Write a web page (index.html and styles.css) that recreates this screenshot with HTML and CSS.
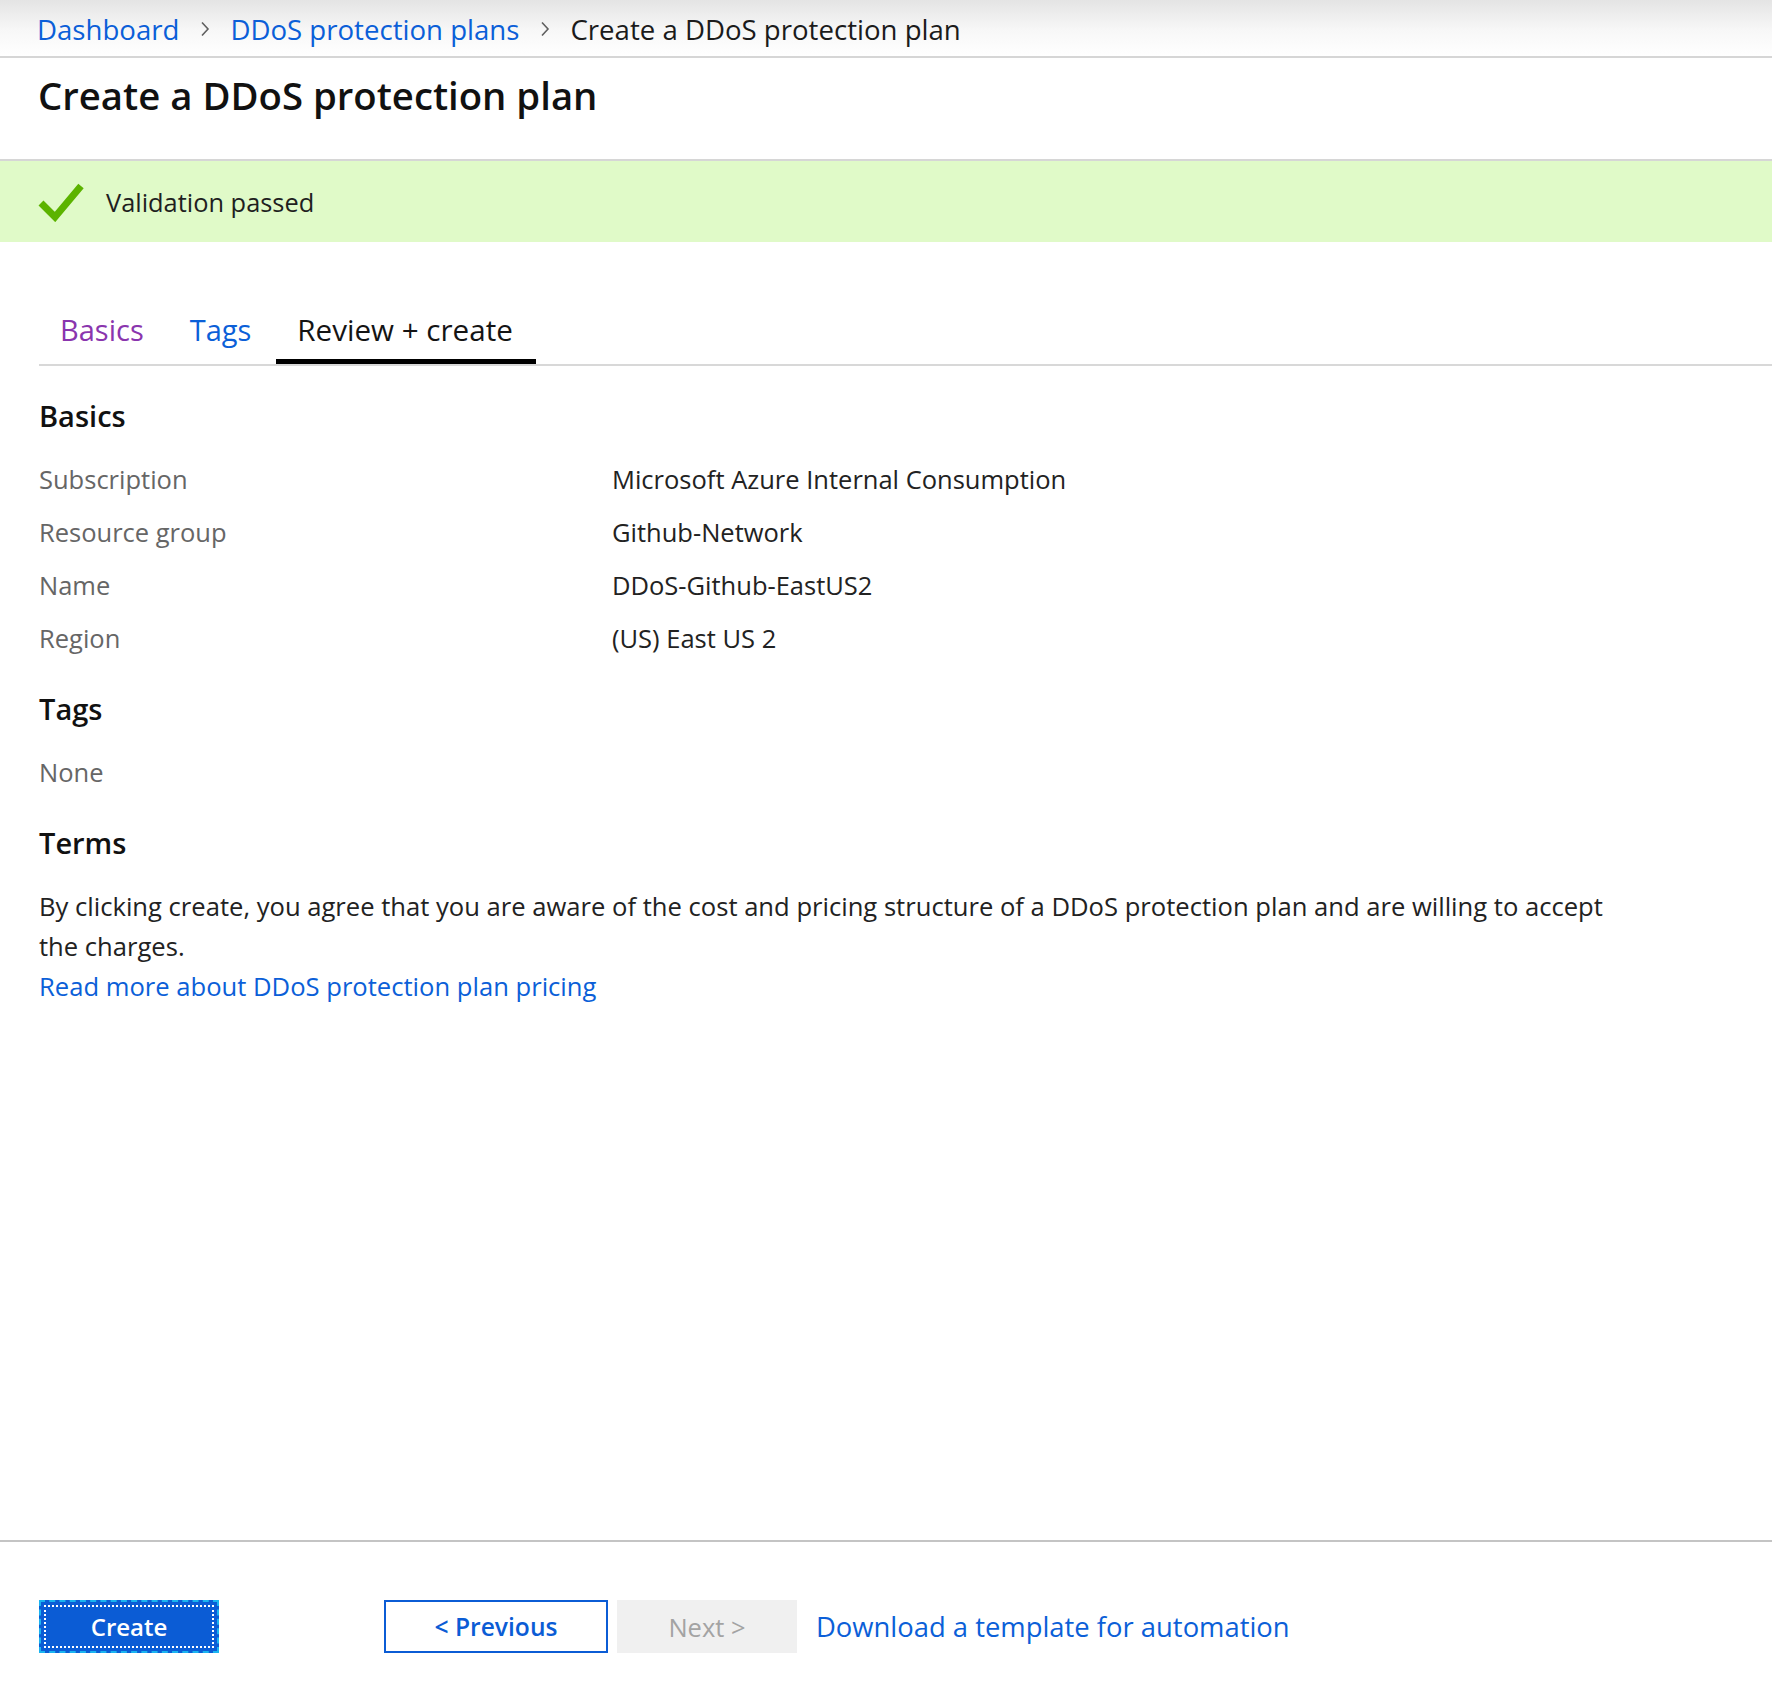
FILE: index.html
```html
<!DOCTYPE html>
<html lang="en">
<head>
<meta charset="utf-8">
<title>Create a DDoS protection plan</title>
<link rel="stylesheet" href="styles.css">
</head>
<body>
<div class="page">
  <nav class="crumbs">
    <a class="crumb-link" href="#">Dashboard</a>
    <svg class="chev" viewBox="0 0 10 16" width="10" height="16"><path d="M2 1.5 L8 8 L2 14.5" fill="none" stroke="#5f5f5f" stroke-width="1.6"/></svg>
    <a class="crumb-link" href="#">DDoS protection plans</a>
    <svg class="chev" viewBox="0 0 10 16" width="10" height="16"><path d="M2 1.5 L8 8 L2 14.5" fill="none" stroke="#5f5f5f" stroke-width="1.6"/></svg>
    <span class="crumb-current">Create a DDoS protection plan</span>
  </nav>

  <header class="title-bar">
    <h1 class="title">Create a DDoS protection plan</h1>
  </header>

  <div class="banner">
    <svg class="check" viewBox="0 0 46 40" width="46" height="40"><polyline points="3,21 17,35 43,4" fill="none" stroke="#5cb300" stroke-width="7" stroke-linejoin="miter" stroke-linecap="butt"/></svg>
    <span class="banner-text">Validation passed</span>
  </div>

  <main class="content">
    <div class="tabs">
      <a class="tab tab-visited" href="#">Basics</a>
      <a class="tab tab-link" href="#">Tags</a>
      <span class="tab tab-active">Review + create</span>
    </div>

    <section class="section section-first">
      <h2 class="sec-title">Basics</h2>
      <div class="row"><span class="label">Subscription</span><span class="value">Microsoft Azure Internal Consumption</span></div>
      <div class="row"><span class="label">Resource group</span><span class="value">Github-Network</span></div>
      <div class="row"><span class="label">Name</span><span class="value">DDoS-Github-EastUS2</span></div>
      <div class="row"><span class="label">Region</span><span class="value">(US) East US 2</span></div>
    </section>

    <section class="section">
      <h2 class="sec-title">Tags</h2>
      <div class="row"><span class="label">None</span></div>
    </section>

    <section class="section">
      <h2 class="sec-title">Terms</h2>
      <p class="terms">By clicking create, you agree that you are aware of the cost and pricing structure of a DDoS protection plan and are willing to accept the charges.<br><a class="link" href="#">Read more about DDoS protection plan pricing</a></p>
    </section>
  </main>

  <footer class="footer">
    <button class="btn btn-primary">Create</button>
    <button class="btn btn-outline">&lt; Previous</button>
    <button class="btn btn-disabled">Next &gt;</button>
    <a class="link footer-link" href="#">Download a template for automation</a>
  </footer>
</div>
</body>
</html>
```

FILE: styles.css
```css
html, body {
  margin: 0;
  padding: 0;
  background: #ffffff;
}

body {
  font-family: "Open Sans", "Noto Sans", sans-serif;
  color: #1b1b1b;
}

.page {
  height: 1682px;
  display: flex;
  flex-direction: column;
}

/* breadcrumb */
.crumbs {
  height: 58px;
  box-sizing: border-box;
  border-bottom: 2px solid #d6d6d6;
  background: linear-gradient(#e4e4e4 0px, #f7f7f7 30px, #ffffff 56px);
  display: flex;
  align-items: center;
  padding-left: 37px;
  padding-top: 2px;
  font-size: 27.6px;
}

.crumb-link {
  color: #0b5fd8;
  text-decoration: none;
}

.crumb-current {
  color: #1b1b1b;
}

.chev {
  margin: 0 20px 0 21px;
}

/* title */
.title-bar {
  height: 103px;
  box-sizing: border-box;
  border-bottom: 2px solid #d6d6d6;
  padding-left: 38px;
}

.title {
  margin: 0;
  padding-top: 13px;
  font-size: 38.3px;
  font-weight: 600;
  line-height: 48px;
  color: #111111;
}

/* banner */
.banner {
  height: 81px;
  background: #e0fac8;
  display: flex;
  align-items: center;
  padding-left: 38px;
}

.check {
  margin-right: 22px;
}

.banner-text {
  font-size: 25.4px;
  color: #1f1f1f;
}

/* content */
.content {
  flex: 1;
  padding-left: 39px;
}

.tabs {
  margin-top: 68px;
  display: flex;
  gap: 4px;
  border-bottom: 2px solid #d8d8d8;
}

.tab {
  display: block;
  font-size: 29px;
  line-height: 40px;
  padding: 0 21px 9px;
  border-bottom: 5px solid transparent;
  text-decoration: none;
}

.tab-visited {
  color: #8a35ae;
}

.tab-link {
  color: #0b5fd8;
}

.tab-active {
  color: #141414;
  border-bottom-color: #000000;
  padding: 0 23px 9px 21px;
  font-size: 29.6px;
}

.section {
  margin-top: 25px;
}

.section-first {
  margin-top: 30px;
}

.sec-title {
  margin: 0 0 16px;
  font-size: 29px;
  font-weight: 600;
  line-height: 40px;
  color: #111111;
}

.row {
  display: flex;
  height: 53px;
  align-items: center;
  font-size: 25.5px;
}

.label {
  width: 573px;
  color: #666666;
}

.value {
  color: #222222;
}

.terms {
  margin: 24px 0 0;
  max-width: 1600px;
  font-size: 25.6px;
  line-height: 40px;
  color: #222222;
}

.link {
  color: #0b5fd8;
  text-decoration: none;
}

/* footer */
.footer {
  border-top: 2px solid #c4c4c4;
  padding: 58px 0 29px 39px;
  display: flex;
  align-items: center;
}

.btn {
  height: 53px;
  box-sizing: border-box;
  font-family: inherit;
  font-size: 24px;
  padding: 0;
  cursor: pointer;
}

.btn-primary {
  width: 180px;
  background-color: #0b5cd5;
  border: 2px dashed #1ab4f0;
  color: #ffffff;
  font-weight: 600;
  outline: 2px dotted #ffffff;
  outline-offset: -7px;
}

.btn-outline {
  width: 224px;
  margin-left: 165px;
  background: #ffffff;
  border: 2px solid #0b5cd5;
  color: #0b5cd5;
  font-weight: 600;
  font-size: 24.6px;
}

.btn-disabled {
  width: 180px;
  margin-left: 9px;
  background: #f0f0f0;
  border: none;
  color: #a3a3a3;
  font-size: 25.5px;
}

.footer-link {
  margin-left: 19px;
  font-size: 27.4px;
}
```
